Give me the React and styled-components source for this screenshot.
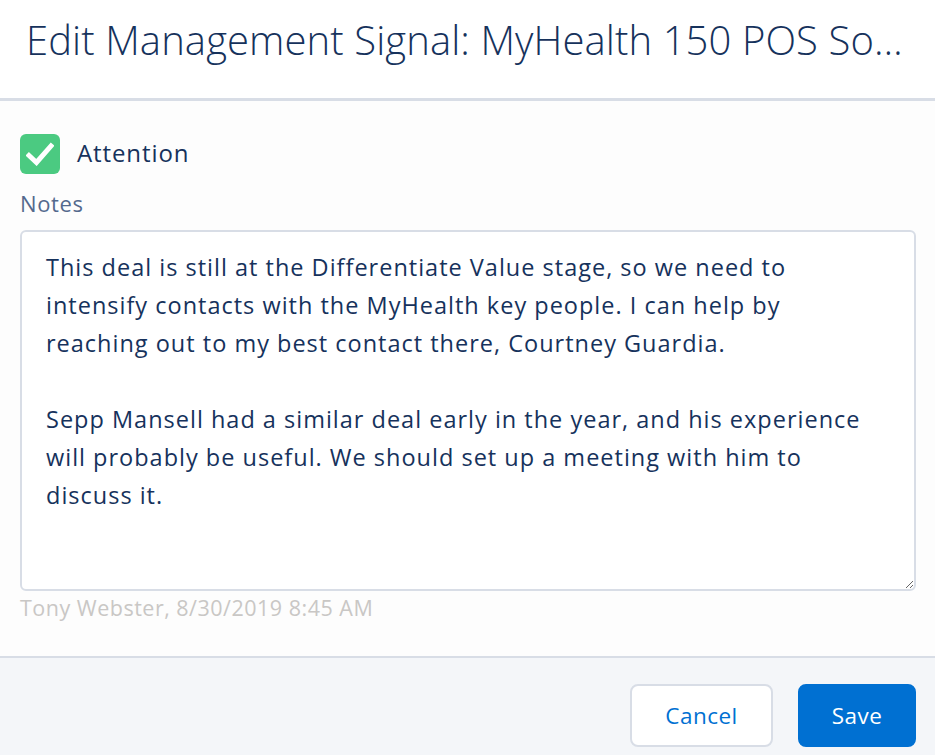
import React, { useState } from "react";
import styled, { createGlobalStyle } from "styled-components";

const GlobalStyle = createGlobalStyle`
  html, body {
    margin: 0;
    padding: 0;
    background: #ffffff;
    font-family: "Open Sans", "Noto Sans", sans-serif;
  }
  * { box-sizing: border-box; }
`;

const initialNotes =
  "This deal is still at the Differentiate Value stage, so we need to\n" +
  "intensify contacts with the MyHealth key people. I can help by\n" +
  "reaching out to my best contact there, Courtney Guardia.\n" +
  "\n" +
  "Sepp Mansell had a similar deal early in the year, and his experience\n" +
  "will probably be useful. We should set up a meeting with him to\n" +
  "discuss it.";

export default function App() {
  const [attention, setAttention] = useState(true);
  const [notes, setNotes] = useState(initialNotes);

  return (
    <>
      <GlobalStyle />
      <Modal>
        <Header>
          <Title>Edit Management Signal: MyHealth 150 POS Solution</Title>
        </Header>
        <Body>
          <CheckRow onClick={() => setAttention(!attention)}>
            <CheckBox checked={attention}>
              {attention && (
                <svg width="28" height="24" viewBox="0 0 28 24">
                  <path
                    d="M3 13.5 L10.5 20.5 L25 4"
                    fill="none"
                    stroke="#ffffff"
                    strokeWidth="5"
                    strokeLinecap="square"
                  />
                </svg>
              )}
            </CheckBox>
            <CheckLabel>Attention</CheckLabel>
          </CheckRow>
          <FieldLabel htmlFor="notes">Notes</FieldLabel>
          <NotesArea
            id="notes"
            value={notes}
            onChange={(e) => setNotes(e.target.value)}
          />
          <Meta>Tony Webster, 8/30/2019 8:45 AM</Meta>
        </Body>
        <Footer>
          <Button>Cancel</Button>
          <Button primary>Save</Button>
        </Footer>
      </Modal>
    </>
  );
}

const Modal = styled.div`
  display: flex;
  flex-direction: column;
  width: 935px;
  height: 755px;
  background: #fdfdfd;
`;

const Header = styled.div`
  height: 101px;
  background: #ffffff;
  border-bottom: 3px solid #d8dde6;
  padding: 12px 26px 0 26px;
`;

const Title = styled.h1`
  margin: 0;
  font-family: "Open Sans", sans-serif;
  font-weight: 300;
  font-size: 40px;
  letter-spacing: 0.1px;
  line-height: 56px;
  color: #16325c;
  white-space: nowrap;
  overflow: hidden;
  text-overflow: ellipsis;
`;

const Body = styled.div`
  flex: 1;
  display: flex;
  flex-direction: column;
  padding: 33px 19px 0 20px;
`;

const CheckRow = styled.div`
  display: flex;
  align-items: center;
  gap: 17px;
  cursor: pointer;
`;

const CheckBox = styled.div`
  width: 40px;
  height: 40px;
  border-radius: 6px;
  display: flex;
  align-items: center;
  justify-content: center;
  background: ${(p) => (p.checked ? "#4bca81" : "#ffffff")};
  border: ${(p) => (p.checked ? "none" : "2px solid #d8dde6")};
`;

const CheckLabel = styled.span`
  font-size: 24px;
  letter-spacing: 0.9px;
  line-height: 32px;
  margin-top: -2px;
  color: #16325c;
`;

const FieldLabel = styled.label`
  margin-top: 14px;
  font-size: 22px;
  letter-spacing: 0.6px;
  line-height: 30px;
  color: #54698d;
`;

const NotesArea = styled.textarea`
  margin-top: 12px;
  height: 361px;
  width: 100%;
  padding: 16px 24px;
  border: 2px solid #d8dde6;
  border-radius: 6px;
  background: #ffffff;
  font-family: "Open Sans", sans-serif;
  font-size: 23.5px;
  letter-spacing: 1px;
  line-height: 38px;
  color: #16325c;
  resize: vertical;
  outline: none;
`;

const Meta = styled.div`
  margin-top: 2px;
  font-size: 21.5px;
  letter-spacing: 0.5px;
  line-height: 30px;
  color: #c9c7c5;
`;

const Footer = styled.div`
  height: 99px;
  background: #f4f6f9;
  border-top: 2px solid #d8dde6;
  display: flex;
  align-items: flex-start;
  justify-content: flex-end;
  gap: 25px;
  padding: 26px 19px 0 0;
`;

const Button = styled.button`
  height: 63px;
  width: ${(p) => (p.primary ? "118px" : "143px")};
  border-radius: 8px;
  border: 2px solid ${(p) => (p.primary ? "#0070d2" : "#d8dde6")};
  background: ${(p) => (p.primary ? "#0070d2" : "#ffffff")};
  color: ${(p) => (p.primary ? "#ffffff" : "#0070d2")};
  font-family: "Open Sans", sans-serif;
  font-size: 22.5px;
  letter-spacing: 0.5px;
  cursor: pointer;
`;
